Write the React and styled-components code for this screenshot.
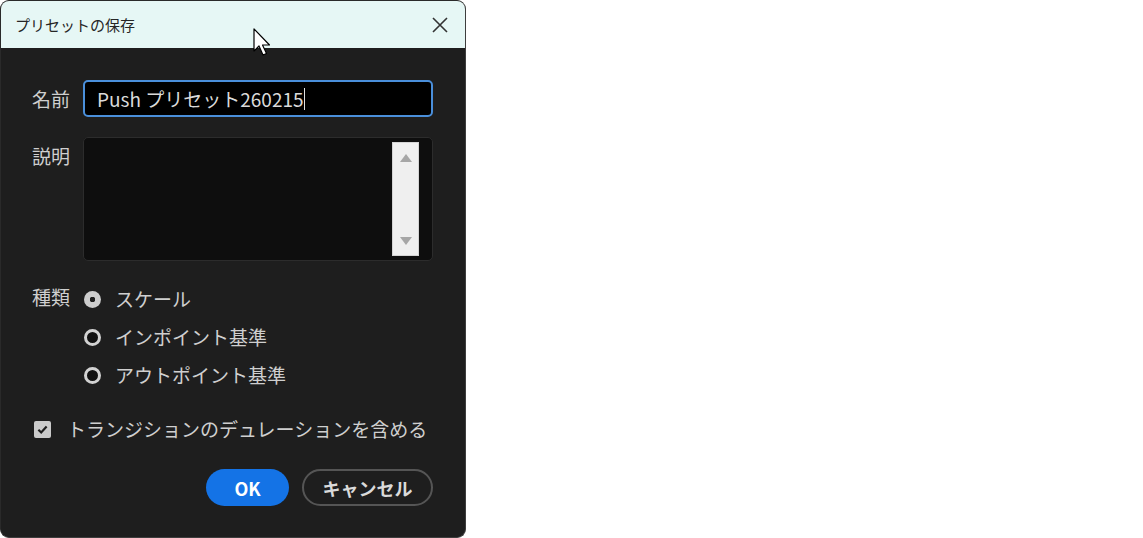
import React from "react";
import styled, { createGlobalStyle } from "styled-components";

const GlobalStyle = createGlobalStyle`
    body{
        margin: 0;
        background: #FFFFFF;
        font-family: "Noto Sans CJK JP", "Noto Sans", sans-serif;
    }
`;

export default function App() {
    return (
        <>
            <GlobalStyle />
            <Dialog>
                <TitleBar>
                    <p>プリセットの保存</p>
                    <CloseIcon viewBox="0 0 16 16">
                        <path d="M1 1 L15 15 M15 1 L1 15" />
                    </CloseIcon>
                </TitleBar>
                <Body>
                    <Row $align="center">
                        <Label>名前</Label>
                        <NameInput>
                            Push プリセット260215<Caret />
                        </NameInput>
                    </Row>
                    <Row $align="flex-start">
                        <Label $top="8px">説明</Label>
                        <TextArea>
                            <ScrollBar>
                                <Arrow $up />
                                <Arrow />
                            </ScrollBar>
                        </TextArea>
                    </Row>
                    <Row $align="flex-start" $top="7px">
                        <Label $top="-2px">種類</Label>
                        <Options>
                            <Option><Radio $checked /><span>スケール</span></Option>
                            <Option><Radio /><span>インポイント基準</span></Option>
                            <Option><Radio /><span>アウトポイント基準</span></Option>
                        </Options>
                    </Row>
                    <CheckRow>
                        <CheckBox>
                            <svg viewBox="0 0 12 12">
                                <path d="M2.2 6.2 L4.8 8.8 L9.8 3.2" />
                            </svg>
                        </CheckBox>
                        <span>トランジションのデュレーションを含める</span>
                    </CheckRow>
                    <Buttons>
                        <Button $primary>OK</Button>
                        <Button>キャンセル</Button>
                    </Buttons>
                </Body>
                <Cursor viewBox="0 0 20 30">
                    <path d="M1 1 L1 23 L6 18 L10 27 L13.5 25.5 L9.5 17 L16.5 17 Z" />
                </Cursor>
            </Dialog>
        </>
    );
}

const Dialog = styled.div`
    position: relative;
    width: 466px;
    height: 538px;
    box-sizing: border-box;
    background: #1E1E1E;
    border: 1px solid #3E3E3E;
    border-top-color: #2A2A2A;
    border-left-color: #2A2A2A;
    border-radius: 9px;
    overflow: hidden;
    display: flex;
    flex-direction: column;
`;
const TitleBar = styled.div`
    height: 47px;
    background: #E6F7F5;
    display: flex;
    align-items: center;
    justify-content: space-between;
    padding: 0 17px 0 14px;
    p{
        margin: 0;
        font-size: 15px;
        color: #262626;
    }
`;
const CloseIcon = styled.svg`
    width: 16px;
    height: 16px;
    fill: none;
    stroke: #333333;
    stroke-width: 1.6;
`;
const Body = styled.div`
    flex: 1;
    display: flex;
    flex-direction: column;
    padding: 32px 32px 0 31px;
    color: #CFCFCF;
    font-size: 19px;
`;
const Row = styled.div`
    display: flex;
    align-items: ${p => p.$align};
    margin-top: ${p => p.$top || "0"};
    margin-bottom: 20px;
`;
const Label = styled.div`
    width: 51px;
    flex-shrink: 0;
    position: relative;
    top: ${p => p.$top || "0"};
    line-height: 22px;
`;
const NameInput = styled.div`
    flex: 1;
    height: 37px;
    box-sizing: border-box;
    background: #000000;
    border: 2px solid #4A8FDB;
    border-radius: 5px;
    padding: 0 12px;
    display: flex;
    align-items: center;
    color: #DADADA;
    white-space: pre;
`;
const Caret = styled.span`
    display: inline-block;
    width: 1px;
    height: 22px;
    background: #E0E0E0;
`;
const TextArea = styled.div`
    flex: 1;
    height: 124px;
    box-sizing: border-box;
    background: #0E0E0E;
    border: 1px solid #2C2C2C;
    border-radius: 5px;
    display: flex;
    justify-content: flex-end;
    padding: 4px 13px 4px 0;
`;
const ScrollBar = styled.div`
    width: 27px;
    box-sizing: border-box;
    background: #EFEFEF;
    border: 1px solid #D4D4D4;
    display: flex;
    flex-direction: column;
    align-items: center;
    justify-content: space-between;
    padding: 11px 0 10px;
`;
const Arrow = styled.div`
    width: 0;
    height: 0;
    border-left: 6px solid transparent;
    border-right: 6px solid transparent;
    ${p => p.$up ? "border-bottom: 8px solid #A6A6A6;" : "border-top: 8px solid #A6A6A6;"}
`;
const Options = styled.div`
    display: flex;
    flex-direction: column;
    gap: 16px;
`;
const Option = styled.div`
    display: flex;
    align-items: center;
    height: 22px;
    line-height: 22px;
    span{
        margin-left: 14px;
    }
`;
const Radio = styled.div`
    width: 17px;
    height: 17px;
    border-radius: 50%;
    box-sizing: border-box;
    margin-left: 1px;
    ${p => p.$checked
        ? `background: radial-gradient(circle, #1E1E1E 0 2.6px, #CDCDCD 3px);`
        : `border: 3px solid #D2D2D2; background: #111111;`}
`;
const CheckRow = styled.div`
    display: flex;
    align-items: center;
    margin-top: 12px;
    line-height: 22px;
    padding-left: 2px;
    span{
        margin-left: 16px;
    }
`;
const CheckBox = styled.div`
    width: 17px;
    height: 17px;
    box-sizing: border-box;
    background: #CACACA;
    border-radius: 2px;
    display: flex;
    align-items: center;
    justify-content: center;
    svg{
        width: 13px;
        height: 13px;
        fill: none;
        stroke: #1E1E1E;
        stroke-width: 2;
    }
`;
const Buttons = styled.div`
    display: flex;
    justify-content: flex-end;
    gap: 13px;
    margin-top: 29px;
`;
const Button = styled.div`
    height: 37px;
    box-sizing: border-box;
    border-radius: 19px;
    display: flex;
    align-items: center;
    justify-content: center;
    font-weight: 700;
    font-size: 18px;
    ${p => p.$primary
        ? `width: 83px; background: #1473E6; color: #FFFFFF;`
        : `width: 131px; border: 2px solid #555555; color: #DADADA;`}
`;
const Cursor = styled.svg`
    position: absolute;
    left: 252px;
    top: 27px;
    width: 20px;
    height: 30px;
    fill: #FFFFFF;
    stroke: #000000;
    stroke-width: 1.2;
    stroke-linejoin: round;
`;
